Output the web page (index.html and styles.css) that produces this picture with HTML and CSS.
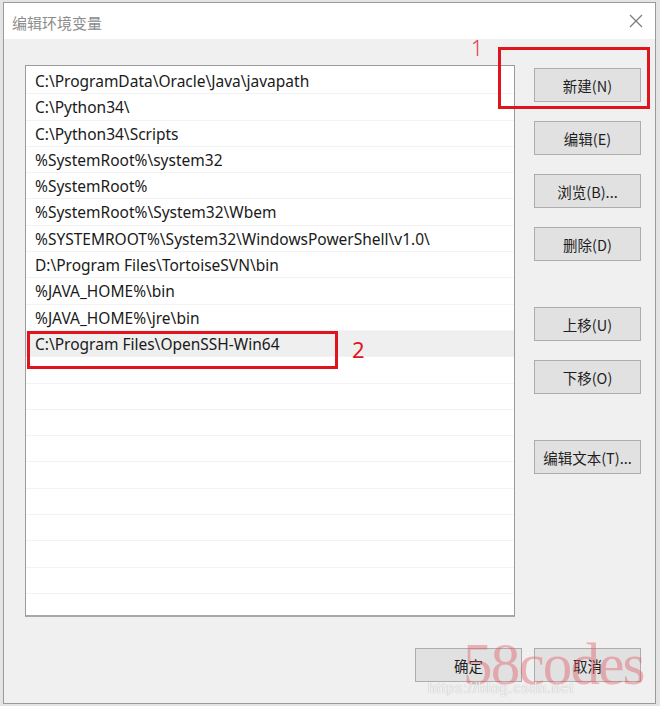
FILE: index.html
```html
<!DOCTYPE html>
<html lang="zh-CN">
<head>
<meta charset="utf-8">
<title>编辑环境变量</title>
<link rel="stylesheet" href="styles.css">
</head>
<body>
<div class="window">
  <div class="titlebar">
    <span class="title">编辑环境变量</span>
    <svg class="close" width="14" height="14" viewBox="0 0 14 14"><path d="M1 1 L13 13 M13 1 L1 13" stroke="#7a7a7a" stroke-width="1.2" fill="none"/></svg>
  </div>
  <div class="main">
    <div class="list">
      <div class="row">C:\ProgramData\Oracle\Java\javapath</div>
      <div class="row">C:\Python34\</div>
      <div class="row">C:\Python34\Scripts</div>
      <div class="row">%SystemRoot%\system32</div>
      <div class="row">%SystemRoot%</div>
      <div class="row">%SystemRoot%\System32\Wbem</div>
      <div class="row">%SYSTEMROOT%\System32\WindowsPowerShell\v1.0\</div>
      <div class="row">D:\Program Files\TortoiseSVN\bin</div>
      <div class="row">%JAVA_HOME%\bin</div>
      <div class="row">%JAVA_HOME%\jre\bin</div>
      <div class="row selected">C:\Program Files\OpenSSH-Win64</div>
      <div class="row"></div>
      <div class="row"></div>
      <div class="row"></div>
      <div class="row"></div>
      <div class="row"></div>
      <div class="row"></div>
      <div class="row"></div>
      <div class="row"></div>
      <div class="row"></div>
      <div class="row"></div>
      <div class="mark mark2"></div>
      <span class="num num2">2</span>
    </div>
    <div class="buttons">
      <div class="btn-wrap">
        <button class="btn">新建(N)</button>
        <div class="mark mark1"></div>
        <span class="num num1">1</span>
      </div>
      <button class="btn">编辑(E)</button>
      <button class="btn">浏览(B)...</button>
      <button class="btn">删除(D)</button>
      <button class="btn spaced">上移(U)</button>
      <button class="btn">下移(O)</button>
      <button class="btn spaced">编辑文本(T)...</button>
    </div>
  </div>
  <div class="footer">
    <button class="btn">确定</button>
    <button class="btn">取消</button>
    <span class="watermark">58codes</span>
    <span class="wm-url">https://blog.csdn.net</span>
  </div>
</div>
</body>
</html>
```

FILE: styles.css
```css
html, body {
  margin: 0;
  padding: 0;
}
body {
  width: 660px;
  height: 706px;
  background: #e4e4e4;
  overflow: hidden;
  font-family: "Noto Sans", "Noto Sans CJK SC", sans-serif;
}
.window {
  position: relative;
  box-sizing: border-box;
  width: 653px;
  height: 702px;
  margin: 2px 0 0 3px;
  border: 1px solid #9a9a9a;
  background: #f0f0f0;
  display: flex;
  flex-direction: column;
  overflow: hidden;
}
.titlebar {
  height: 36px;
  background: #ffffff;
  display: flex;
  align-items: center;
  justify-content: space-between;
  padding: 0 10px 0 8px;
}
.title {
  font-family: "Noto Sans CJK SC", sans-serif;
  font-size: 15px;
  color: #8c8c8c;
  position: relative;
  top: 1px;
}
.close {
  position: relative;
  right: 2px;
}
.main {
  display: flex;
  align-items: flex-start;
  padding: 26px 0 0 21px;
}
.list {
  position: relative;
  box-sizing: border-box;
  width: 490px;
  height: 552px;
  background: #ffffff;
  border: 1px solid #9b9b9b;
  border-bottom: 2px solid #a8a8a8;
  padding-top: 2px;
  overflow: hidden;
}
.row {
  box-sizing: border-box;
  height: 26.3px;
  border-bottom: 1px solid #f3f3f3;
  padding-left: 9px;
  font-size: 15.5px;
  line-height: 26px;
  color: #1a1a1a;
  white-space: nowrap;
}
.row.selected {
  background: #efefef;
}
.mark {
  position: absolute;
  border: 3px solid #e0141c;
  box-sizing: border-box;
}
.mark2 {
  left: 1px;
  top: 265px;
  width: 311px;
  height: 38px;
}
.num {
  position: absolute;
  color: #e0141c;
  font-family: "Noto Sans", sans-serif;
}
.num2 {
  left: 326px;
  top: 270px;
  font-size: 22px;
  line-height: 26px;
}
.buttons {
  display: flex;
  flex-direction: column;
  margin-left: 19px;
  padding-top: 3px;
  gap: 19px;
}
.btn-wrap {
  position: relative;
}
.mark1 {
  left: -36px;
  top: -21px;
  width: 152px;
  height: 62px;
}
.num1 {
  left: -63px;
  top: -33px;
  font-size: 21px;
  font-weight: 300;
  line-height: 26px;
  color: #e23a40;
}
.btn {
  box-sizing: border-box;
  width: 107px;
  height: 34px;
  background: #e1e1e1;
  border: 1px solid #adadad;
  border-radius: 0;
  font-family: "Noto Sans CJK SC", sans-serif;
  font-size: 14.5px;
  color: #1e1e1e;
  padding: 0;
  display: block;
}
.btn.spaced {
  margin-top: 27px;
}
.footer {
  position: relative;
  flex: 1;
  display: flex;
  justify-content: flex-end;
  align-items: flex-start;
  gap: 12px;
  padding: 31px 14px 0 0;
}
.watermark {
  position: absolute;
  left: 459px;
  top: 17px;
  font-family: "Liberation Serif", serif;
  font-size: 59px;
  line-height: 60px;
  letter-spacing: -1.8px;
  color: rgba(225, 90, 100, 0.42);
  pointer-events: none;
}
.wm-url {
  position: absolute;
  left: 424px;
  top: 63px;
  font-family: "Liberation Sans", sans-serif;
  font-size: 14px;
  line-height: 16px;
  letter-spacing: 1px;
  color: rgba(255, 255, 255, 0.9);
  text-shadow: 0 0 1px #9a9a9a;
  pointer-events: none;
}
```
